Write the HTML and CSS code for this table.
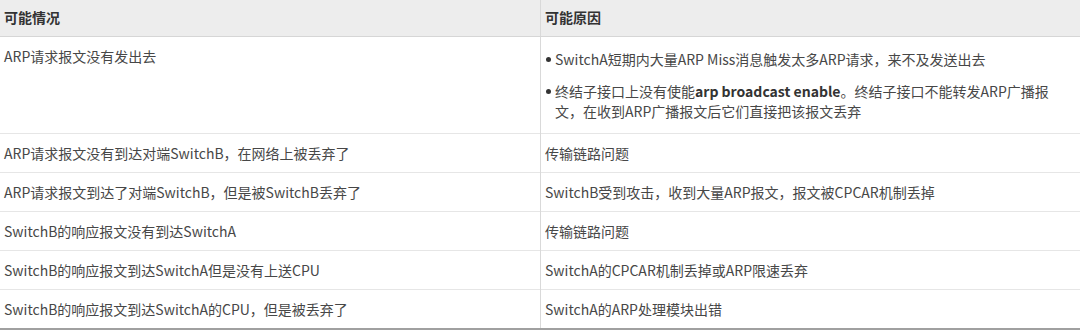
FILE: index.html
```html
<!DOCTYPE html>
<html lang="zh-CN">
<head>
<meta charset="utf-8">
<title>ARP 故障可能原因</title>
<link rel="stylesheet" href="styles.css">
</head>
<body>
<table class="cause-table">
  <thead>
    <tr>
      <th class="col-case">可能情况</th>
      <th class="col-reason">可能原因</th>
    </tr>
  </thead>
  <tbody>
    <tr class="row-tall">
      <td>ARP请求报文没有发出去</td>
      <td>
        <ul class="reason-list">
          <li><span>SwitchA短期内大量ARP Miss消息触发太多ARP请求，来不及发送出去</span></li>
          <li><span>终结子接口上没有使能<b>arp broadcast enable</b>。终结子接口不能转发ARP广播报<br>文，在收到ARP广播报文后它们直接把该报文丢弃</span></li>
        </ul>
      </td>
    </tr>
    <tr>
      <td>ARP请求报文没有到达对端SwitchB，在网络上被丢弃了</td>
      <td>传输链路问题</td>
    </tr>
    <tr>
      <td>ARP请求报文到达了对端SwitchB，但是被SwitchB丢弃了</td>
      <td>SwitchB受到攻击，收到大量ARP报文，报文被CPCAR机制丢掉</td>
    </tr>
    <tr>
      <td>SwitchB的响应报文没有到达SwitchA</td>
      <td>传输链路问题</td>
    </tr>
    <tr>
      <td>SwitchB的响应报文到达SwitchA但是没有上送CPU</td>
      <td>SwitchA的CPCAR机制丢掉或ARP限速丢弃</td>
    </tr>
    <tr>
      <td>SwitchB的响应报文到达SwitchA的CPU，但是被丢弃了</td>
      <td>SwitchA的ARP处理模块出错</td>
    </tr>
  </tbody>
</table>
</body>
</html>
```

FILE: styles.css
```css
html, body {
  margin: 0;
  padding: 0;
  background: #ffffff;
}

body {
  font-family: "Noto Sans CJK SC", "Noto Sans", sans-serif;
  font-size: 14px;
  color: #474747;
}

.cause-table {
  width: 1080px;
  border-collapse: collapse;
  table-layout: fixed;
  border-bottom: 2px solid #a0a0a0;
}

.cause-table th,
.cause-table td {
  text-align: left;
  vertical-align: top;
  line-height: 20px;
  padding: 9px 4px;
}

.cause-table th {
  background: #ededed;
  color: #333333;
  font-weight: bold;
  height: 20px;
  padding-top: 7px;
  padding-bottom: 9px;
  border-bottom: 1px solid #d6d6d6;
}

.col-case {
  width: 532px;
}

.cause-table th + th,
.cause-table td + td {
  border-left: 1px solid #d9d9d9;
}

.cause-table tbody tr {
  border-bottom: 1px solid #e6e6e6;
}

.cause-table tbody tr:last-child {
  border-bottom: none;
}

.cause-table td {
  height: 20px;
}

.row-tall td {
  height: 78px;
}

.reason-list {
  list-style: none;
  margin: 0;
  padding: 3px 0;
}

.reason-list li {
  display: flex;
  align-items: flex-start;
}

.reason-list li + li {
  margin-top: 12px;
}

.reason-list li::before {
  content: "";
  flex: none;
  width: 5px;
  height: 5px;
  border-radius: 50%;
  background: #333333;
  margin: 8px 4px 0 1px;
}

.reason-list b {
  color: #333333;
}
```
